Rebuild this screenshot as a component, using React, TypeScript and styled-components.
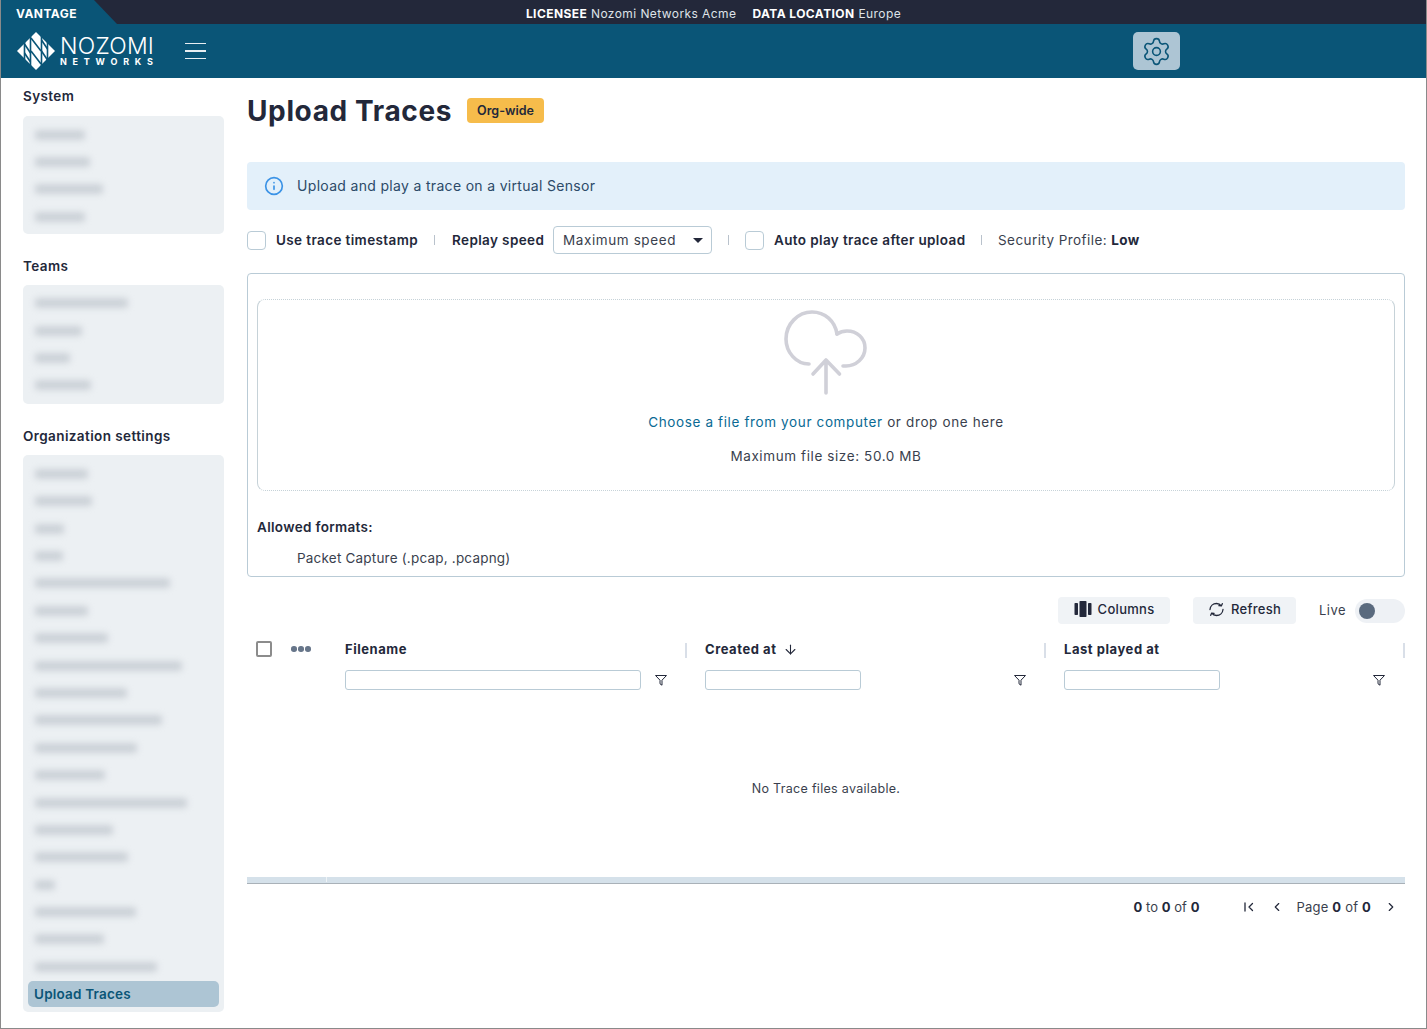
import React from "react";
import styled, { createGlobalStyle } from "styled-components";
import { Settings, Info, ArrowDown, ChevronLeft, ChevronRight } from "lucide-react";

const Global = createGlobalStyle`
  html, body { margin: 0; padding: 0; background: #fff; }
  body { font-family: Inter, "Open Sans", "Liberation Sans", sans-serif; color: #23283a; }
  * { box-sizing: border-box; }
`;

const Page = styled.div`
  width: 1427px; height: 1029px; border: 1px solid #8a8a8a; border-top: 0;
  display: flex; flex-direction: column; overflow: hidden;
`;
const TopBar = styled.div`
  height: 24px; background: #23283a; color: #fff; display: flex; align-items: center;
  justify-content: center; position: relative; font-size: 12px; gap: 16px; padding-top: 3px;
`;
const VantageTab = styled.div`
  position: absolute; left: 0; top: 0; width: 116px; height: 24px; background: #0a5577;
  clip-path: polygon(0 0, 93px 0, 116px 24px, 0 24px);
  font-size: 12px; font-weight: 700; padding: 6px 0 0 15px; letter-spacing: .45px;
`;
const Meta = styled.span`color: #dfe3e8; font-size: 12px; letter-spacing: .42px; b { color: #fff; font-weight: 700; }`;
const Header = styled.header`
  height: 54px; background: #0a5577; display: flex; align-items: center; padding-left: 15px; position: relative;
`;
const LogoWrap = styled.div`display: flex; align-items: center; gap: 4px; width: 169px;`;
const LogoText = styled.div`display: flex; flex-direction: column; color: #fff; line-height: 1;`;
const LogoMain = styled.span`font-size: 23px; font-weight: 300; letter-spacing: 0.25px; line-height: 21px;`;
const LogoSub = styled.span`font-size: 9px; font-weight: 700; letter-spacing: 5.75px; line-height: 10px;`;
const Burger = styled.div`
  width: 21px; display: flex; flex-direction: column; gap: 6px;
  i { display: block; height: 1.5px; background: #e8eef2; }
`;
const GearButton = styled.div`
  position: absolute; left: 1132px; top: 8px; width: 47px; height: 38px; background: #adc5d4; border-radius: 5px;
  display: flex; align-items: center; justify-content: center; color: #0a5577;
`;
const Body = styled.div`flex: 1; display: flex; min-height: 0;`;
const Sidebar = styled.aside`width: 246px; padding: 8px 0 0 22px; flex: none;`;
const SectionTitle = styled.div<{ $first?: boolean }>`
  height: 20px; line-height: 20px; font-size: 13.5px; font-weight: 600; letter-spacing: .4px;
  margin: ${(p) => (p.$first ? "0 0 10px" : "22px 0 9px")};
`;
const Panel = styled.div<{ $pb?: number }>`
  width: 201px; background: #ecf0f3; border-radius: 5px; padding: 5px 5px ${(p) => p.$pb ?? 5}px; display: flex; flex-direction: column;
`;
const MaskedItem = styled.div`height: 27.4px; display: flex; align-items: center; padding-left: 7px;`;
const MaskedBar = styled.div<{ $w: number }>`
  width: ${(p) => p.$w}px; height: 10px; background: #ccd2d8; filter: blur(3px); border-radius: 3px;
`;
const ActiveItem = styled.div`
  height: 26px; background: #adc5d4; border-radius: 5px; color: #0a5577; font-size: 13.5px;
  font-weight: 600; line-height: 26px; padding-left: 6px; letter-spacing: .2px;
`;
const Main = styled.main`flex: 1; padding-right: 21px; min-width: 0;`;
const TitleRow = styled.div`display: flex; align-items: center; gap: 16px; height: 40px; margin-top: 13px;`;
const Title = styled.h1`margin: 0; font-size: 28px; font-weight: 700; letter-spacing: .62px; width: 204px; white-space: nowrap;`;
const Badge = styled.span`
  height: 25px; width: 77px; background: #f6bc4b; border-radius: 4px; font-size: 12.5px; font-weight: 600;
  display: flex; align-items: center; justify-content: center; margin-top: -1px;
`;
const InfoBar = styled.div`
  margin-top: 31px; height: 48px; background: #e3f0fa; border-radius: 4px; display: flex; align-items: center;
  padding: 0 0 1px 17px; gap: 13px; font-size: 14px; color: #2c4a68; letter-spacing: .32px; svg { color: #3b93e6; }
`;
const Options = styled.div`display: flex; align-items: center; height: 30px; margin-top: 15px; font-size: 13.5px;`;
const Check = styled.span<{ $gray?: boolean; $size?: number }>`
  width: ${(p) => p.$size ?? 19}px; height: ${(p) => p.$size ?? 19}px; flex: none;
  border: ${(p) => (p.$gray ? "2px solid #8c8c8c" : "1px solid #b9cbd6")}; border-radius: ${(p) => (p.$gray ? 2 : 4)}px; display: block;
`;
const BoldLabel = styled.span<{ $w: number; $ml: number }>`
  font-weight: 600; width: ${(p) => p.$w}px; margin-left: ${(p) => p.$ml}px; white-space: nowrap; letter-spacing: .38px; flex: none;
`;
const Sep = styled.span<{ $l: number; $r: number }>`
  width: 1px; height: 10px; background: #b9c2cc; margin: 0 ${(p) => p.$r}px 0 ${(p) => p.$l}px; flex: none;
`;
const SelectBox = styled.div`
  width: 159px; height: 28px; margin-left: 9px; border: 1px solid #b9cbd6; border-radius: 4px; display: flex; flex: none;
  align-items: center; justify-content: space-between; padding: 0 8px 0 9px; font-size: 13.5px; color: #3a3f4e; letter-spacing: .6px;
`;
const Caret = styled.i`width: 0; height: 0; border: 5px solid transparent; border-top: 5px solid #23283a; border-bottom: 0; display: block;`;
const Plain = styled.span`white-space: nowrap; letter-spacing: .43px; color: #3a3f4e; b { font-weight: 700; color: #23283a; }`;
const UploadCard = styled.section`
  margin-top: 18px; height: 304px; border: 1px solid #b9cbd6; border-radius: 4px; padding: 25px 9px 0; font-size: 13.5px;
`;
const DropZone = styled.div`
  height: 192px; border: 1px solid #c6d2d8; border-top-style: dotted; border-bottom-style: dotted; border-radius: 8px;
  display: flex; flex-direction: column; align-items: center; padding-top: 9px;
`;
const DropLine = styled.div`margin-top: 13px; height: 20px; line-height: 20px; letter-spacing: .63px; color: #3a3f4e; a { color: #0a6a94; }`;
const DropNote = styled.div`margin-top: 14px; height: 20px; line-height: 20px; letter-spacing: .6px; color: #3a3f4e;`;
const Formats = styled.div`margin-top: 26px; font-weight: 600; height: 20px; line-height: 20px; letter-spacing: .32px;`;
const FormatItem = styled.div`margin: 11px 0 0 40px; height: 20px; line-height: 20px; letter-spacing: .2px; color: #3a3f4e;`;
const Toolbar = styled.div`display: flex; align-items: center; justify-content: flex-end; height: 27px; margin-top: 20px; font-size: 13px;`;
const ToolButton = styled.div<{ $w: number; $mr: number }>`
  width: ${(p) => p.$w}px; height: 27px; margin-right: ${(p) => p.$mr}px; background: #f0f3f6; border-radius: 4px; display: flex;
  align-items: center; justify-content: center; gap: 6px; font-weight: 500; letter-spacing: .3px; padding-bottom: 3px;
`;
const LiveLabel = styled.span`color: #3a3f4e; margin-right: 9px; letter-spacing: .45px; padding-bottom: 1px;`;
const Toggle = styled.div`width: 50px; height: 24px; background: #eef1f5; border-radius: 12px; padding: 4px;`;
const Knob = styled.div`width: 16px; height: 16px; border-radius: 50%; background: #5a6a7e;`;
const TableHead = styled.div`display: grid; grid-template-columns: 44px 54px 360px 359px 341px; margin-top: 16px;`;
const CheckCell = styled.div`padding: 1px 0 0 9px;`;
const DotsCell = styled.div`display: flex; gap: 1.5px; padding-top: 6px; i { width: 5.5px; height: 5.5px; border-radius: 50%; background: #67768a; display: block; }`;
const Column = styled.div<{ $last?: boolean }>`padding-right: ${(p) => (p.$last ? 0 : 18)}px;`;
const ColTitle = styled.div`
  display: flex; justify-content: space-between; align-items: center; height: 18px; font-size: 13px; font-weight: 700; letter-spacing: .55px;
`;
const TitleGroup = styled.span`display: flex; align-items: center; gap: 7px;`;
const ColSep = styled.i`width: 2px; height: 15px; background: #d9dfe8; display: block; margin-top: 2px;`;
const FilterRow = styled.div`display: flex; justify-content: space-between; align-items: center; padding-right: 19px; margin-top: 12px;`;
const FilterInput = styled.div<{ $w: number }>`width: ${(p) => p.$w}px; height: 20px; border: 1px solid #b9cbd6; border-radius: 3px;`;
const Empty = styled.div`height: 187px; display: flex; align-items: center; justify-content: center; font-size: 12.5px; color: #3a3f4e; padding-top: 10px; letter-spacing: .3px;`;
const ScrollTrack = styled.div`height: 6.5px; background: #d5e1ea; border-bottom: 1.5px solid #a9b1b8; padding-left: 79px;`;
const ScrollTick = styled.i`display: block; width: 1px; height: 5px; background: #eef3f6;`;
const Pager = styled.div`display: flex; align-items: center; height: 20px; margin-top: 13.5px; padding-right: 7px; font-size: 13px; justify-content: flex-end; color: #3a3f4e; letter-spacing: .2px; b { font-weight: 700; color: #23283a; }`;
const PagerCount = styled.span`letter-spacing: .05px;`;
const PageLabel = styled.span`margin-left: 13px;`;
const PagerIcon = styled.span<{ $ml: number }>`display: flex; margin-left: ${(p) => p.$ml}px; color: #23283a;`;

const Logo = () => (
  <svg width="40" height="40" viewBox="0 0 40 40" fill="none">
    <path d="M20 1 39 20 20 39 1 20Z" fill="#fff" />
    <g stroke="#0a5577" strokeWidth="1.6">
      <path d="M8.5 11v18M14.5 5v30M25.5 5v30M31.5 11v18" />
      <path d="M8.5 13l6 9M8.5 22l6 9M25.5 9l6 9M25.5 20l6 9M15 7l10 13M15 20l10 13" />
    </g>
  </svg>
);
const Cloud = () => (
  <svg width="90" height="90" viewBox="0 0 90 90" fill="none" stroke="#d0d0d8" strokeWidth="3.6" strokeLinecap="round" strokeLinejoin="round">
    <path d="M28 55C15 55 5 43 5 30 5 15 17 3 31 3c13 0 23 9 25 22" />
    <path d="M56 25c3-2 6-3 10-3 10 0 18 7 18 17 0 10-9 18-19 18h-3" />
    <path d="M45 84V51M32 65 45 51 58.5 65" />
  </svg>
);
const ColumnsIcon = () => (
  <svg width="18" height="18" viewBox="0 0 18 18" fill="#23283a">
    <rect x="0.5" y="3" width="3.5" height="12" rx=".8" /><rect x="5.5" y="1" width="7" height="16" rx=".8" /><rect x="14" y="3" width="3.5" height="12" rx=".8" />
  </svg>
);
const RefreshIcon = () => (
  <svg width="17" height="17" viewBox="0 0 17 17" fill="none" stroke="#23283a" strokeWidth="1.3" strokeLinecap="round" strokeLinejoin="round">
    <path d="M2 8.5C2.3 5 5 2.5 8.5 2.5c2 0 3.7.9 4.8 2.4l1-2.2M15 8.5c-.3 3.5-3 6-6.5 6-2 0-3.7-.9-4.8-2.4l-1 2.2M13.3 4.9l-2.4-.2M3.7 12.1l2.4.2" />
  </svg>
);
const FilterIcon = () => (
  <svg width="14" height="14" viewBox="0 0 14 14" fill="none" stroke="#23283a" strokeWidth="1" strokeLinejoin="round">
    <path d="M1.5 2.5h11L8 7.2v5L6 10.8V7.2Z" />
  </svg>
);
const FirstIcon = () => (
  <svg width="12" height="12" viewBox="0 0 12 12" fill="none" stroke="#23283a" strokeWidth="1.3" strokeLinecap="round" strokeLinejoin="round">
    <path d="M2 2v8M9.5 2.5 6 6l3.5 3.5" />
  </svg>
);

const systemBars = [50, 55, 68, 50];
const teamBars = [93, 47, 35, 56];
const orgBars = [53, 57, 29, 28, 135, 53, 73, 147, 92, 127, 102, 70, 152, 78, 93, 20, 101, 69, 122];

const Bars = ({ list }: { list: number[] }) => (
  <>
    {list.map((w, i) => (
      <MaskedItem key={i}><MaskedBar $w={w} /></MaskedItem>
    ))}
  </>
);

export default function App() {
  return (
    <Page>
      <Global />
      <TopBar>
        <VantageTab>VANTAGE</VantageTab>
        <Meta><b>LICENSEE</b> Nozomi Networks Acme</Meta>
        <Meta><b>DATA LOCATION</b> Europe</Meta>
      </TopBar>
      <Header>
        <LogoWrap>
          <Logo />
          <LogoText>
            <LogoMain>NOZOMI</LogoMain>
            <LogoSub>NETWORKS</LogoSub>
          </LogoText>
        </LogoWrap>
        <Burger><i /><i /><i /></Burger>
        <GearButton><Settings size={31} strokeWidth={1.2} /></GearButton>
      </Header>
      <Body>
        <Sidebar>
          <SectionTitle $first>System</SectionTitle>
          <Panel $pb={3}><Bars list={systemBars} /></Panel>
          <SectionTitle>Teams</SectionTitle>
          <Panel><Bars list={teamBars} /></Panel>
          <SectionTitle>Organization settings</SectionTitle>
          <Panel>
            <Bars list={orgBars} />
            <ActiveItem>Upload Traces</ActiveItem>
          </Panel>
        </Sidebar>
        <Main>
          <TitleRow>
            <Title>Upload Traces</Title>
            <Badge>Org-wide</Badge>
          </TitleRow>
          <InfoBar><Info size={20} strokeWidth={2} />Upload and play a trace on a virtual Sensor</InfoBar>
          <Options>
            <Check />
            <BoldLabel $w={143} $ml={10}>Use trace timestamp</BoldLabel>
            <Sep $l={15} $r={17} />
            <BoldLabel $w={92} $ml={0}>Replay speed</BoldLabel>
            <SelectBox>Maximum speed<Caret /></SelectBox>
            <Sep $l={16} $r={16} />
            <Check />
            <BoldLabel $w={191} $ml={10}>Auto play trace after upload</BoldLabel>
            <Sep $l={16} $r={16} />
            <Plain>Security Profile: <b>Low</b></Plain>
          </Options>
          <UploadCard>
            <DropZone>
              <Cloud />
              <DropLine><a>Choose a file from your computer</a> or drop one here</DropLine>
              <DropNote>Maximum file size: 50.0 MB</DropNote>
            </DropZone>
            <Formats>Allowed formats:</Formats>
            <FormatItem>Packet Capture (.pcap, .pcapng)</FormatItem>
          </UploadCard>
          <Toolbar>
            <ToolButton $w={112} $mr={23}><ColumnsIcon />Columns</ToolButton>
            <ToolButton $w={103} $mr={23}><RefreshIcon />Refresh</ToolButton>
            <LiveLabel>Live</LiveLabel>
            <Toggle><Knob /></Toggle>
          </Toolbar>
          <TableHead>
            <CheckCell><Check $gray $size={16} /></CheckCell>
            <DotsCell><i /><i /><i /></DotsCell>
            <Column>
              <ColTitle>Filename<ColSep /></ColTitle>
              <FilterRow><FilterInput $w={296} /><FilterIcon /></FilterRow>
            </Column>
            <Column>
              <ColTitle>
                <TitleGroup>Created at <ArrowDown size={15} strokeWidth={1.7} /></TitleGroup>
                <ColSep />
              </ColTitle>
              <FilterRow><FilterInput $w={156} /><FilterIcon /></FilterRow>
            </Column>
            <Column $last>
              <ColTitle>Last played at<ColSep /></ColTitle>
              <FilterRow><FilterInput $w={156} /><FilterIcon /></FilterRow>
            </Column>
          </TableHead>
          <Empty>No Trace files available.</Empty>
          <ScrollTrack><ScrollTick /></ScrollTrack>
          <Pager>
            <PagerCount><b>0</b> to <b>0</b> of <b>0</b></PagerCount>
            <PagerIcon $ml={43}><FirstIcon /></PagerIcon>
            <PagerIcon $ml={15}><ChevronLeft size={14} /></PagerIcon>
            <PageLabel>Page <b>0</b> of <b>0</b></PageLabel>
            <PagerIcon $ml={13}><ChevronRight size={14} /></PagerIcon>
          </Pager>
        </Main>
      </Body>
    </Page>
  );
}
